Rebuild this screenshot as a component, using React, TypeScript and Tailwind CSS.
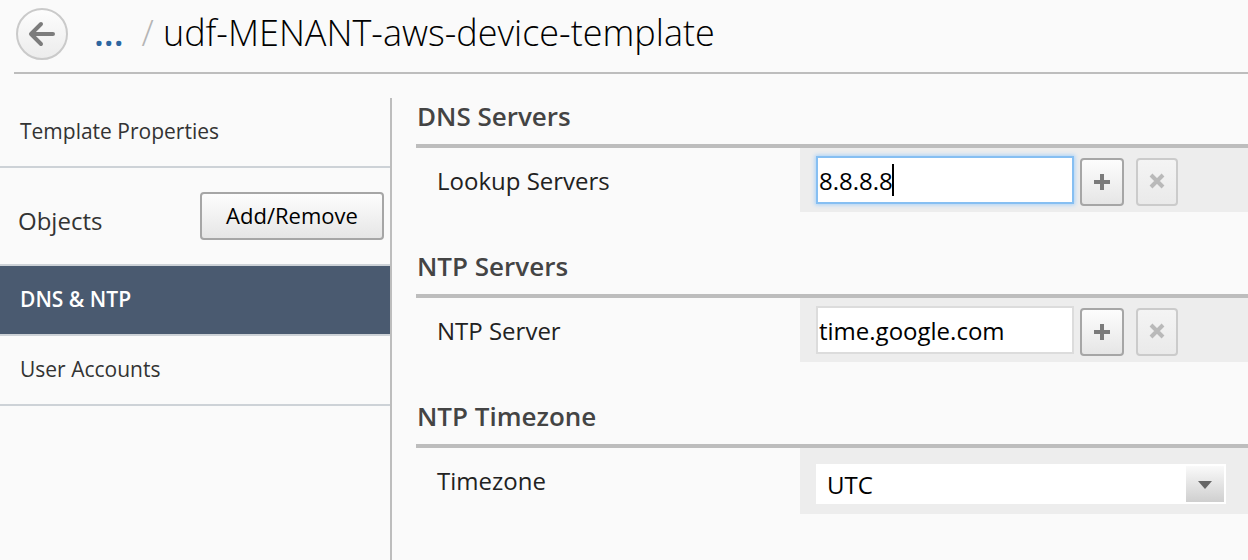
import { useState } from "react";
import type { ReactNode } from "react";

const raised =
  "shrink-0 rounded-[4px] border-2 border-[#a6a6a6] bg-linear-to-b from-[#fdfdfd] to-[#e6e6e6]";

function Section({ title, children }: { title: string; children: ReactNode }) {
  return (
    <section className="mb-9">
      <h2 className="border-b-4 border-[#bdbdbd] pt-0.5 pb-3 pl-px text-[26px] leading-8 font-semibold text-[#444]">
        {title}
      </h2>
      {children}
    </section>
  );
}

function Row({ label, id, children }: { label: string; id: string; children: ReactNode }) {
  return (
    <div className="flex">
      <label htmlFor={id} className="w-96 shrink-0 pt-[17px] pl-[21px] text-2xl leading-8 text-[#222]">
        {label}
      </label>
      <div className="min-w-0 grow bg-[#ededed] pl-4">{children}</div>
    </div>
  );
}

function ServerField({ id, initial, active = false }: { id: string; initial: string; active?: boolean }) {
  const [value, setValue] = useState(initial);
  return (
    <div className="flex py-2">
      <div className="relative mr-1.5 w-[258px] shrink-0">
        <input
          id={id}
          value={value}
          onChange={(e) => setValue(e.target.value)}
          className={
            active
              ? "h-12 w-full border-2 border-[#86bff2] bg-white px-px text-2xl text-black shadow-[0_0_4px_1px_#a9d2f8] outline-none"
              : "h-12 w-full border-2 border-[#dcdcdc] bg-white px-px text-2xl text-black outline-none"
          }
        />
        {active && value === initial && (
          <span className="absolute top-2 left-[76px] h-8 w-0.5 bg-black" aria-hidden="true" />
        )}
      </div>
      <button type="button" aria-label="Add server" className={`${raised} mt-0.5 -mb-0.5 mr-3 flex h-12 w-11 items-center justify-center`}>
        <svg width="16" height="16" viewBox="0 0 16 16" aria-hidden="true">
          <path d="M8 0v16M0 8h16" stroke="#7b7b7b" strokeWidth="4" />
        </svg>
      </button>
      <button
        type="button"
        disabled
        aria-label="Remove server"
        className="mt-0.5 -mb-0.5 flex h-12 w-[42px] shrink-0 items-center justify-center rounded-[4px] border-2 border-[#cbcbcb] bg-linear-to-b from-[#f4f4f4] to-[#eaeaea] pb-0.5"
      >
        <svg width="16" height="16" viewBox="0 0 16 16" aria-hidden="true">
          <path d="M2 2l12 12M14 2L2 14" stroke="#b9b9b9" strokeWidth="4" />
        </svg>
      </button>
    </div>
  );
}

export default function App() {
  return (
    <div className="flex min-h-screen flex-col overflow-x-hidden bg-[#fafafa] font-['Open_Sans','Noto_Sans',sans-serif] text-black">
      <header className="ml-3.5 flex h-[74px] items-start border-b-2 border-[#bdbdbd] pt-2 pl-0.5">
        <button
          type="button"
          aria-label="Back"
          className="flex size-13 shrink-0 items-center justify-center rounded-full border-2 border-[#cacaca] bg-linear-to-b from-[#fdfdfd] to-[#ececec]"
        >
          <svg width="28" height="26" viewBox="0 0 28 26" fill="none" stroke="#7c7c7c" strokeWidth="4" aria-hidden="true">
            <path d="M13 3L3 13l10 10M4 13h21" strokeLinecap="round" strokeLinejoin="round" />
          </svg>
        </button>
        <nav className="flex items-baseline text-4xl leading-[50px] whitespace-nowrap">
          <a href="#templates" className="ml-[26px] font-semibold text-[#2d66a0]">...</a>
          <span className="ml-[18px] font-light text-[#b5b5b5]">/</span>
          <h1 className="ml-[9px] font-light">udf-MENANT-aws-device-template</h1>
        </nav>
      </header>

      <div className="mt-6 flex grow">
        <aside className="w-[392px] shrink-0 border-r-2 border-[#bdbdbd] text-[21px] text-[#333]">
          <a href="#properties" className="flex h-[70px] items-center border-b-2 border-[#cdd2d7] pl-5">
            Template Properties
          </a>
          <div className="flex h-[98px] items-start justify-between border-b-2 border-[#cdd2d7] pt-6 pr-1.5 pl-[18px]">
            <span className="pt-[11px] text-2xl leading-9">Objects</span>
            <button type="button" className={`${raised} h-12 w-[184px] pb-0.5 text-[22px] text-black`}>
              Add/Remove
            </button>
          </div>
          <a href="#dns" aria-current="page" className="flex h-[70px] items-center border-b-2 border-[#cdd2d7] bg-[#4a5a70] pl-5 font-semibold text-white">
            DNS &amp; NTP
          </a>
          <a href="#users" className="flex h-[70px] items-center border-b-2 border-[#cdd2d7] pl-5">
            User Accounts
          </a>
        </aside>

        <main className="ml-6 min-w-0 grow">
          <Section title="DNS Servers">
            <Row label="Lookup Servers" id="lookup">
              <ServerField id="lookup" initial="8.8.8.8" active />
            </Row>
          </Section>
          <Section title="NTP Servers">
            <Row label="NTP Server" id="ntp">
              <ServerField id="ntp" initial="time.google.com" />
            </Row>
          </Section>
          <Section title="NTP Timezone">
            <Row label="Timezone" id="timezone">
              <div className="pt-4 pb-2.5">
                <div className="relative h-10 w-[410px]">
                  <select id="timezone" className="size-full appearance-none bg-white pt-0.5 pl-[11px] text-2xl text-black outline-none">
                    <option>UTC</option>
                  </select>
                  <span className="pointer-events-none absolute inset-y-0.5 right-0.5 flex w-[38px] items-center justify-center bg-linear-to-b from-[#fafafa] to-[#cfcfcf] pt-0.5">
                    <svg width="14" height="8" viewBox="0 0 14 8" aria-hidden="true">
                      <path d="M0 0h14L7 8z" fill="#666" />
                    </svg>
                  </span>
                </div>
              </div>
            </Row>
          </Section>
        </main>
      </div>
    </div>
  );
}
